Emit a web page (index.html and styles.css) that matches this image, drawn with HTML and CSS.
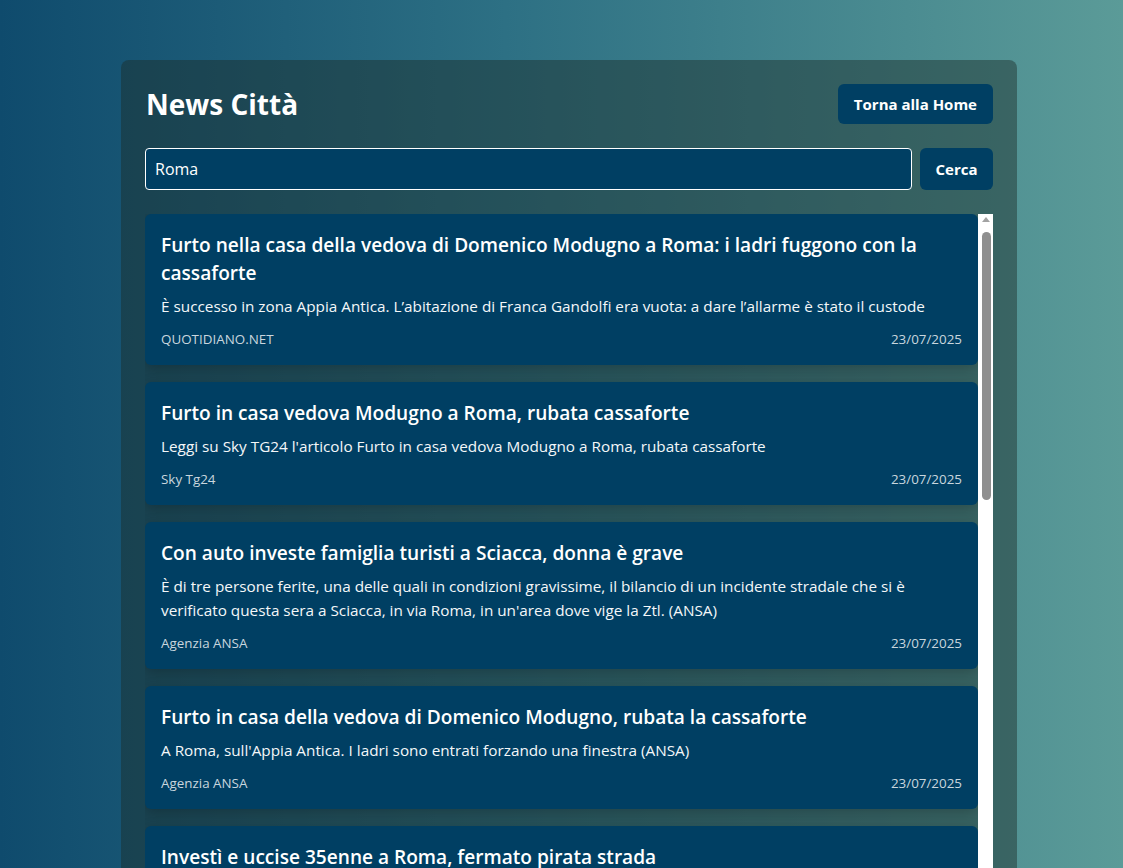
FILE: index.html
```html
<!DOCTYPE html>
<html lang="it">
<head>
<meta charset="utf-8">
<title>News Città</title>
<link rel="stylesheet" href="styles.css">
</head>
<body>
<main class="container">
  <header class="header">
    <h1 class="title">News Città</h1>
    <button class="btn">Torna alla Home</button>
  </header>
  <form class="search">
    <input class="search-input" type="text" value="Roma">
    <button class="btn btn-search" type="button">Cerca</button>
  </form>
  <section class="feed">
    <div class="list">
      <article class="card">
        <h2 class="card-title">Furto nella casa della vedova di Domenico Modugno a Roma: i ladri fuggono con la cassaforte</h2>
        <p class="card-desc">È successo in zona Appia Antica. L’abitazione di Franca Gandolfi era vuota: a dare l’allarme è stato il custode</p>
        <div class="card-meta"><span>QUOTIDIANO.NET</span><span>23/07/2025</span></div>
      </article>
      <article class="card">
        <h2 class="card-title">Furto in casa vedova Modugno a Roma, rubata cassaforte</h2>
        <p class="card-desc">Leggi su Sky TG24 l'articolo Furto in casa vedova Modugno a Roma, rubata cassaforte</p>
        <div class="card-meta"><span>Sky Tg24</span><span>23/07/2025</span></div>
      </article>
      <article class="card">
        <h2 class="card-title">Con auto investe famiglia turisti a Sciacca, donna è grave</h2>
        <p class="card-desc">È di tre persone ferite, una delle quali in condizioni gravissime, il bilancio di un incidente stradale che si è verificato questa sera a Sciacca, in via Roma, in un'area dove vige la Ztl. (ANSA)</p>
        <div class="card-meta"><span>Agenzia ANSA</span><span>23/07/2025</span></div>
      </article>
      <article class="card">
        <h2 class="card-title">Furto in casa della vedova di Domenico Modugno, rubata la cassaforte</h2>
        <p class="card-desc">A Roma, sull'Appia Antica. I ladri sono entrati forzando una finestra (ANSA)</p>
        <div class="card-meta"><span>Agenzia ANSA</span><span>23/07/2025</span></div>
      </article>
      <article class="card">
        <h2 class="card-title">Investì e uccise 35enne a Roma, fermato pirata strada</h2>
        <p class="card-desc">L'uomo è stato rintracciato dalla polizia locale dopo giorni di indagini (ANSA)</p>
        <div class="card-meta"><span>Agenzia ANSA</span><span>23/07/2025</span></div>
      </article>
    </div>
    <div class="scrollbar" aria-hidden="true">
      <span class="sb-arrow sb-up"></span>
      <span class="sb-thumb"></span>
      <span class="sb-arrow sb-down"></span>
    </div>
  </section>
</main>
</body>
</html>
```

FILE: styles.css
```css
* { box-sizing: border-box; }

html, body { margin: 0; }

body {
  min-height: 100vh;
  padding: 60px 0 0 15px;
  font-family: "Open Sans", "Noto Sans", sans-serif;
  color: #fff;
  background: linear-gradient(to right, #0f4b6d 0%, #2d7084 45%, #5b9b98 100%);
  overflow: hidden;
}

.container {
  width: 896px;
  margin: 0 auto;
  padding: 24px;
  border-radius: 8px;
  background: rgba(28, 46, 42, 0.46);
}

.header {
  display: flex;
  justify-content: space-between;
  align-items: center;
}

.title {
  margin: 0 0 0 1px;
  font-size: 28px;
  font-weight: 700;
  line-height: 40px;
}

.btn {
  height: 40px;
  padding: 0 16px;
  border: 0;
  border-radius: 6px;
  background: #003f63;
  color: #fff;
  font-family: inherit;
  font-size: 15px;
  font-weight: 700;
  cursor: pointer;
}

.search {
  display: flex;
  gap: 8px;
  margin-top: 24px;
}

.search-input {
  flex: 1;
  height: 42px;
  padding: 0 9px;
  border: 1px solid #fff;
  border-radius: 4px;
  background: #003f63;
  color: #fff;
  font-family: inherit;
  font-size: 16px;
}

.btn-search {
  height: 42px;
  width: 73px;
  padding: 0;
}

.feed {
  display: flex;
  margin-top: 24px;
  height: 662px;
}

.list {
  flex: 1;
  min-width: 0;
  overflow: hidden;
}

.scrollbar {
  flex: 0 0 15px;
  display: flex;
  flex-direction: column;
  align-items: center;
  background: #fff;
}

.sb-arrow {
  width: 0;
  height: 0;
  border-left: 4px solid transparent;
  border-right: 4px solid transparent;
}

.sb-up {
  margin: 3px 0 0 1px;
  border-bottom: 5px solid #a3a3a3;
}

.sb-down {
  margin: auto 0 3px 1px;
  border-top: 5px solid #a3a3a3;
}

.sb-thumb {
  width: 9px;
  height: 268px;
  margin: 10px 0 0 1px;
  border-radius: 5px;
  background: #8f8f8f;
}

.card {
  margin: 0 0 17px;
  padding: 17px 16px 16px;
  border-radius: 6px;
  background: #003f63;
  box-shadow: 0 4px 14px rgba(0, 0, 0, 0.22);
}

.card-title {
  margin: 0 0 7px;
  font-size: 19.1px;
  font-weight: 600;
  line-height: 28px;
}

.card-desc {
  margin: 0 0 12px;
  font-size: 15.3px;
  line-height: 24px;
  color: #f4f7f9;
}

.card-meta {
  display: flex;
  justify-content: space-between;
  font-size: 13.4px;
  line-height: 19px;
  color: #c9d6de;
}
```
